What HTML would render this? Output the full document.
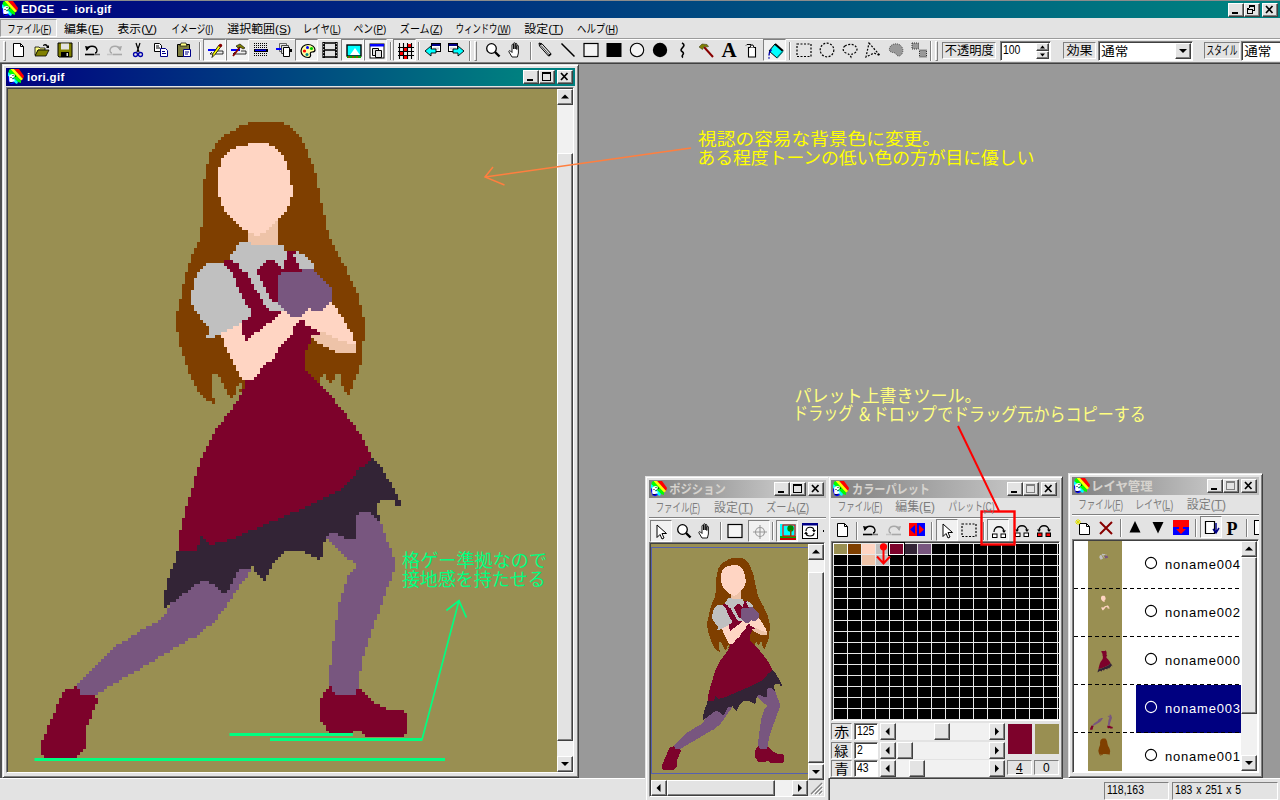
<!DOCTYPE html><html><head><meta charset="utf-8"><title>EDGE - iori.gif</title><style>
*{box-sizing:border-box}
html,body{margin:0;padding:0}
body{width:1280px;height:800px;overflow:hidden;position:relative;background:#E3E3E3;font-family:"Liberation Sans",sans-serif;font-size:12px;color:#000}
.a{position:absolute}
.face{background:#E3E3E3}
.win{position:absolute;background:#E3E3E3;border:1px solid;border-color:#E3E3E3 #404040 #404040 #E3E3E3;box-shadow:inset 1px 1px #fff,inset -1px -1px #808080}
.cap{position:absolute;height:18px;color:#fff;font-weight:bold;font-size:11px;line-height:18px;white-space:nowrap}
.capA{background:linear-gradient(90deg,#000080 0%,#008080 100%)}
.capI{background:linear-gradient(90deg,#808080 0%,#C0C0C0 100%);color:#D6D3CE}
.btn{position:absolute;background:#E3E3E3;border:1px solid;border-color:#fff #404040 #404040 #fff;box-shadow:inset -1px -1px #808080}
.sunk{position:absolute;border:1px solid;border-color:#808080 #fff #fff #808080;box-shadow:inset 1px 1px #404040}
.sunk1{position:absolute;border:1px solid;border-color:#808080 #fff #fff #808080}
.chk{position:absolute;border:1px solid;border-color:#808080 #fff #fff #808080;background:#F1F1F1}
.trk{position:absolute;background:#F1F1F1}
.vsep{position:absolute;width:2px;border-left:1px solid #808080;border-right:1px solid #fff}
.hsep{position:absolute;height:2px;border-top:1px solid #808080;border-bottom:1px solid #fff}
.grip{position:absolute;width:3px;border:1px solid;border-color:#fff #808080 #808080 #fff}
svg{position:absolute;overflow:visible}
.lt{position:absolute;font-size:13px;letter-spacing:.8px;white-space:nowrap}
.nd{position:absolute;font-size:12px;white-space:nowrap;transform:scaleX(.87);transform-origin:0 0}
</style></head><body><svg style="left:0;top:0" width="0" height="0"><defs><g id="Lhair"><path fill="#7F3F00" d="M80 11h12v1h-12zM77 12h17v1h-17zM76 13h19v1h-19zM74 14h22v1h-22zM72 15h25v1h-25zM71 16h27v1h-27zM70 17h28v1h-28zM69 18h30v2h-30zM68 20h32v1h-32zM67 21h33v2h-33zM67 23h34v2h-34zM66 25h36v3h-36zM66 28h37v2h-37zM65 30h38v3h-38zM65 33h39v5h-39zM65 38h40v4h-40zM65 42h41v4h-41zM64 46h42v1h-42zM64 47h43v3h-43zM64 50h44v1h-44zM63 51h45v1h-45zM63 52h46v1h-46zM62 53h47v1h-47zM62 54h48v1h-48zM61 55h49v1h-49zM61 56h50v2h-50zM60 58h52v1h-52zM60 59h53v2h-53zM59 61h54v1h-54zM59 62h55v2h-55zM59 64h56v1h-56zM58 65h57v1h-57zM58 66h58v2h-58zM58 68h59v2h-59zM57 70h60v2h-60zM57 72h61v2h-61zM56 74h62v2h-62zM56 76h63v5h-63zM57 81h62v3h-62zM57 84h61v2h-61zM58 86h60v3h-60zM59 89h59v3h-59zM60 92h57v3h-57zM61 95h7v2h-7zM70 95h10v1h-10zM99 95h6v1h-6zM106 95h3v2h-3zM111 95h5v2h-5zM71 96h9v2h-9zM102 96h2v1h-2zM62 97h6v2h-6zM103 97h1v1h-1zM107 97h1v1h-1zM111 97h4v2h-4zM72 98h5v1h-5zM78 98h1v2h-1zM63 99h5v2h-5zM72 99h4v1h-4zM112 99h3v1h-3zM73 100h3v2h-3zM77 100h2v1h-2zM112 100h2v1h-2zM64 101h4v1h-4zM113 101h1v1h-1zM65 102h3v1h-3zM74 102h1v1h-1zM66 103h3v1h-3zM68 104h1v1h-1z"/></g><g id="LlegB"><path fill="#7D022B" d="M22 199h1v1h-1zM19 200h5v1h-5zM18 201h6v1h-6zM18 202h11v1h-11zM17 203h13v2h-13zM16 205h13v2h-13zM16 207h12v1h-12zM15 208h13v2h-13zM14 210h13v2h-13zM13 212h13v3h-13zM12 215h14v2h-14zM11 217h15v3h-15zM11 220h14v1h-14zM11 221h13v1h-13zM12 222h11v1h-11z"/><path fill="#78567F" d="M72 159h9v1h-9zM70 160h11v1h-11zM68 161h12v1h-12zM66 162h14v1h-14zM64 163h15v1h-15zM62 164h16v1h-16zM60 165h17v1h-17zM59 166h18v1h-18zM57 167h19v1h-19zM56 168h19v1h-19zM55 169h20v1h-20zM55 170h19v1h-19zM54 171h19v2h-19zM53 173h19v1h-19zM53 174h18v1h-18zM52 175h18v1h-18zM51 176h19v1h-19zM50 177h19v1h-19zM48 178h20v1h-20zM46 179h20v1h-20zM44 180h21v1h-21zM43 181h21v1h-21zM41 182h22v1h-22zM40 183h20v1h-20zM38 184h21v1h-21zM36 185h21v1h-21zM35 186h20v1h-20zM34 187h20v1h-20zM33 188h19v1h-19zM32 189h18v1h-18zM31 190h18v1h-18zM30 191h17v1h-17zM29 192h16v1h-16zM28 193h16v1h-16zM27 194h15v1h-15zM26 195h14v1h-14zM25 196h13v1h-13zM24 197h13v1h-13zM23 198h12v1h-12zM23 199h10v1h-10zM24 200h8v1h-8zM24 201h6v1h-6z"/></g><g id="Ldress"><path fill="#7D022B" d="M93 54h3v3h-3zM72 57h26v4h-26zM73 61h25v1h-25zM73 62h27v2h-27zM74 64h26v3h-26zM75 67h25v1h-25zM76 68h24v2h-24zM77 70h23v4h-23zM78 74h22v3h-22zM78 77h21v2h-21zM78 79h23v1h-23zM78 80h25v1h-25zM78 81h26v1h-26zM78 82h25v1h-25zM79 83h22v1h-22zM80 84h21v1h-21zM80 85h20v2h-20zM80 87h19v7h-19zM80 94h20v1h-20zM80 95h21v1h-21zM80 96h22v1h-22zM79 97h24v1h-24zM79 98h25v1h-25zM79 99h26v1h-26zM78 100h28v1h-28zM78 101h29v1h-29zM77 102h31v1h-31zM77 103h32v1h-32zM76 104h33v1h-33zM75 105h35v1h-35zM75 106h36v1h-36zM74 107h38v1h-38zM73 108h40v1h-40zM72 109h41v1h-41zM72 110h42v1h-42zM71 111h44v1h-44zM70 112h46v1h-46zM69 113h47v1h-47zM69 114h48v1h-48zM68 115h50v2h-50zM67 117h52v2h-52zM66 119h54v2h-54zM65 121h56v2h-56zM64 123h57v1h-57zM64 124h56v1h-56zM64 125h55v1h-55zM63 126h54v1h-54zM63 127h53v2h-53zM62 129h53v1h-53zM62 130h52v1h-52zM62 131h51v1h-51zM62 132h50v1h-50zM61 133h50v1h-50zM61 134h48v1h-48zM61 135h46v1h-46zM60 136h45v1h-45zM60 137h43v1h-43zM60 138h41v1h-41zM59 139h40v1h-40zM59 140h38v1h-38zM59 141h35v1h-35zM59 142h33v1h-33zM58 143h32v1h-32zM58 144h29v1h-29zM58 145h27v1h-27zM58 146h25v1h-25zM57 147h23v1h-23zM57 148h21v1h-21zM57 149h7v3h-7zM65 149h11v1h-11zM66 150h7v1h-7zM67 151h2v1h-2zM57 152h6v2h-6z"/><path fill="#332436" d="M121 123h1v1h-1zM120 124h3v1h-3zM119 125h5v1h-5zM117 126h8v1h-8zM116 127h9v1h-9zM116 128h10v1h-10zM115 129h11v1h-11zM114 130h13v1h-13zM113 131h15v1h-15zM112 132h16v1h-16zM111 133h18v1h-18zM109 134h20v1h-20zM107 135h23v1h-23zM105 136h25v1h-25zM103 137h21v1h-21zM129 137h2v2h-2zM101 138h22v1h-22zM99 139h24v1h-24zM97 140h26v1h-26zM94 141h29v1h-29zM92 142h32v1h-32zM90 143h34v1h-34zM87 144h34v1h-34zM85 145h34v1h-34zM83 146h34v1h-34zM80 147h37v1h-37zM78 148h39v1h-39zM64 149h1v1h-1zM76 149h41v1h-41zM64 150h2v1h-2zM73 150h33v1h-33zM64 151h3v1h-3zM69 151h36v1h-36zM63 152h42v2h-42zM56 154h36v1h-36zM99 154h6v1h-6zM56 155h35v1h-35zM101 155h4v1h-4zM56 156h34v1h-34zM103 156h1v1h-1zM56 157h33v1h-33zM55 158h33v1h-33zM55 159h26v1h-26zM82 159h6v1h-6zM54 160h23v1h-23zM82 160h5v1h-5zM54 161h22v2h-22zM83 161h4v1h-4zM84 162h2v1h-2zM53 163h22v1h-22zM85 163h1v1h-1zM53 164h11v1h-11zM67 164h8v1h-8zM53 165h9v1h-9zM69 165h5v1h-5zM53 166h8v1h-8zM70 166h4v1h-4zM52 167h8v1h-8zM71 167h2v1h-2zM52 168h6v1h-6zM52 169h5v1h-5zM52 170h4v1h-4zM52 171h2v1h-2zM52 172h1v1h-1z"/></g><g id="Lskin"><path fill="#FFD5C3" d="M80 18h7v1h-7zM76 19h13v1h-13zM74 20h16v1h-16zM73 21h18v1h-18zM72 22h20v1h-20zM71 23h21v1h-21zM71 24h22v2h-22zM70 26h23v1h-23zM70 27h24v5h-24zM70 32h25v4h-25zM71 36h23v3h-23zM72 39h21v2h-21zM73 41h19v1h-19zM74 42h17v1h-17zM75 43h15v1h-15zM76 44h13v1h-13zM77 45h11v1h-11zM78 46h9v1h-9zM80 47h6v1h-6zM82 48h2v1h-2zM100 71h8v1h-8zM100 72h9v1h-9zM100 73h10v1h-10zM91 74h19v1h-19zM90 75h21v1h-21zM89 76h23v1h-23zM88 77h9v1h-9zM99 77h13v1h-13zM77 78h1v1h-1zM86 78h10v1h-10zM99 78h14v1h-14zM75 79h3v1h-3zM85 79h10v1h-10zM101 79h12v1h-12zM73 80h5v1h-5zM84 80h11v1h-11zM103 80h11v1h-11zM71 81h7v1h-7zM82 81h13v1h-13zM106 81h9v1h-9zM71 82h8v1h-8zM81 82h13v1h-13zM108 82h7v1h-7zM72 83h7v1h-7zM80 83h13v1h-13zM110 83h5v1h-5zM72 84h20v1h-20zM113 84h3v1h-3zM72 85h19v1h-19zM73 86h17v2h-17zM74 88h15v2h-15zM75 90h13v1h-13zM75 91h11v1h-11zM76 92h9v1h-9zM76 93h8v1h-8zM77 94h7v1h-7zM77 95h6v1h-6zM78 96h4v1h-4z"/><path fill="#EEC3A8" d="M89 44h1v1h-1zM88 45h2v1h-2zM87 46h3v1h-3zM86 47h4v1h-4zM80 48h2v1h-2zM84 48h6v1h-6zM80 49h10v3h-10zM104 81h2v1h-2zM101 82h7v1h-7zM102 83h8v1h-8zM103 84h10v1h-10zM105 85h11v1h-11zM107 86h9v1h-9zM109 87h7v1h-7z"/></g><g id="Lshirt"><path fill="#C0C0C0" d="M77 51h4v1h-4zM76 52h16v2h-16zM75 54h18v1h-18zM96 54h1v1h-1zM74 55h19v2h-19zM95 55h4v1h-4zM96 56h4v1h-4zM75 57h11v1h-11zM89 57h3v1h-3zM96 57h5v1h-5zM66 58h6v1h-6zM77 58h8v1h-8zM90 58h2v1h-2zM97 58h5v2h-5zM65 59h8v1h-8zM77 59h7v1h-7zM91 59h1v1h-1zM64 60h10v1h-10zM78 60h5v1h-5zM63 61h12v2h-12zM80 61h3v1h-3zM80 62h4v1h-4zM62 63h14v3h-14zM81 63h3v1h-3zM81 64h4v1h-4zM82 65h3v1h-3zM62 66h15v1h-15zM82 66h4v1h-4zM61 67h16v1h-16zM83 67h3v1h-3zM61 68h17v2h-17zM84 68h3v2h-3zM61 70h18v2h-18zM85 70h3v1h-3zM85 71h5v1h-5zM62 72h18v1h-18zM86 72h5v1h-5zM62 73h19v1h-19zM87 73h5v1h-5zM63 74h18v1h-18zM64 75h17v1h-17zM64 76h16v1h-16zM65 77h13v1h-13zM66 78h11v1h-11zM67 79h8v1h-8zM67 80h6v1h-6zM67 81h4v1h-4zM66 82h3v1h-3z"/><path fill="#78567F" d="M98 60h4v1h-4zM91 61h12v1h-12zM90 62h14v1h-14zM90 63h15v1h-15zM90 64h16v1h-16zM90 65h17v1h-17zM90 66h18v5h-18zM90 71h17v1h-17zM91 72h15v1h-15zM92 73h8v1h-8zM101 73h4v1h-4zM93 74h6v1h-6zM94 75h4v1h-4z"/></g><g id="LlegF"><path fill="#7D022B" d="M107 199h1v1h-1zM106 200h2v1h-2zM116 200h2v1h-2zM105 201h4v1h-4zM116 201h3v1h-3zM105 202h15v1h-15zM104 203h17v1h-17zM104 204h18v1h-18zM104 205h20v1h-20zM104 206h22v1h-22zM104 207h28v1h-28zM104 208h29v3h-29zM105 211h28v1h-28zM106 212h27v2h-27zM107 214h8v1h-8zM118 214h15v1h-15zM119 215h13v1h-13z"/><path fill="#78567F" d="M117 141h4v1h-4zM116 142h6v1h-6zM116 143h7v1h-7zM116 144h8v1h-8zM116 145h9v3h-9zM107 148h3v1h-3zM116 148h10v2h-10zM106 149h6v1h-6zM107 150h19v1h-19zM108 151h19v1h-19zM109 152h18v1h-18zM110 153h18v1h-18zM111 154h17v1h-17zM112 155h16v1h-16zM113 156h16v1h-16zM115 157h14v1h-14zM116 158h13v2h-13zM115 160h14v1h-14zM114 161h14v1h-14zM113 162h15v2h-15zM113 164h14v1h-14zM112 165h15v1h-15zM112 166h14v2h-14zM111 168h15v1h-15zM111 169h14v2h-14zM110 171h15v1h-15zM110 172h14v3h-14zM110 175h13v2h-13zM109 177h13v3h-13zM109 180h12v3h-12zM109 183h11v1h-11zM108 184h12v2h-12zM108 186h11v3h-11zM108 189h10v3h-10zM107 192h11v2h-11zM107 194h10v5h-10zM108 199h9v1h-9zM108 200h8v1h-8zM109 201h7v1h-7z"/></g><g id="girl"><use href="#Lhair"/><use href="#LlegB"/><use href="#Ldress"/><use href="#Lskin"/><use href="#Lshirt"/><use href="#LlegF"/></g></defs></svg><div class="a" style="left:0px;top:0px;width:1280px;height:1px;background:#8c8c8c"></div><div class="cap capA" style="left:0px;top:1px;width:1280px;height:17px;background:linear-gradient(90deg,#000080,#008080 95.8%)"><span class="a" style="left:21px;top:-1px;font-size:11.5px;letter-spacing:.2px">EDGE &nbsp;&ndash;&nbsp; iori.gif</span></div><svg style="left:2px;top:1px" width="16" height="16" viewBox="0 0 16 16" ><path d="M6 0h5l5 7-1 3z" fill="#f00"/><path d="M3 0h3l9 10-2 1.5L2.5 2z" fill="#ff0"/><path d="M1 1l1.5-1L13 11.5v2.5l-3-1L.5 3.5z" fill="#0f0"/><path d="M0 3.5h.8L10 13l-1 2-2-1L0 7z" fill="#0ff"/><path d="M0 7l7 7-3 1.2-2.5-1L0 10z" fill="#00f"/><path d="M1.2 6.5l2.8-1.5 2.5.5.5 2-2 1.2-.8 1.8 2-.3.5 2-3.5 1-2-.7z" fill="#fff"/><path d="M2.5 8h1v1h-1zM4.5 6h1v1h-1zM4.5 9h1v1h-1zM6.8 6.5h.9v1.5h-.9zM2 13h2.5v.8H2z" fill="#000"/></svg><div class="btn" style="left:1228px;top:3px;width:16px;height:14px;"><svg style="left:0px;top:0px" width="14" height="12" viewBox="0 0 14 12" ><rect x="3" y="8" width="6" height="2" fill="#000"/></svg></div><div class="btn" style="left:1244px;top:3px;width:16px;height:14px;"><svg style="left:0px;top:0px" width="14" height="12" viewBox="0 0 14 12" ><path d="M4 1h6v6H8V5H4zM5 3v1h3v2h1V3zM2 4h6v6H2zM3 6v3h4V6z" fill="#000" fill-rule="evenodd"/></svg></div><div class="btn" style="left:1262px;top:3px;width:16px;height:14px;"><svg style="left:0px;top:0px" width="14" height="12" viewBox="0 0 14 12" ><path d="M3 2l6.5 7M9.5 2L3 9" stroke="#000" stroke-width="1.7" fill="none"/></svg></div><div class="face a" style="left:0px;top:18px;width:1280px;height:20px;"></div><div class="sunk1" style="left:0px;top:19px;width:57px;height:18px;border-color:#9a9a9a #fff #fff #9a9a9a;background:#E1E1E1"></div><div class="a" style="left:0px;top:38px;width:1280px;height:1px;background:#9c9c9c"></div><div class="a" style="left:0px;top:39px;width:1280px;height:1px;background:#fff"></div><div class="a" style="left:0px;top:62px;width:1280px;height:1px;background:#808080"></div><div class="a" style="left:0px;top:63px;width:1280px;height:715px;background:#999999;border-top:1px solid #404040;border-left:2px solid #505050"></div><div class="face a" style="left:0px;top:778px;width:1280px;height:22px;border-top:1px solid #fff"></div><div class="sunk1" style="left:1104px;top:782px;width:65px;height:18px;"><span class="nd" style="left:2px;top:0px">118,163</span></div><div class="sunk1" style="left:1172px;top:782px;width:106px;height:18px;"><span class="nd" style="left:2px;top:0px;word-spacing:1px">183 x 251 x 5</span></div><div class="grip" style="left:3px;top:41px;width:3px;height:20px;"></div><svg style="left:11px;top:42px" width="16" height="16" viewBox="0 0 16 16" ><path d="M2.5 1.5h7l3 3v10h-10z" fill="#fff" stroke="#000"/><path d="M9.5 1.5v3h3" stroke="#000" fill="none"/></svg><svg style="left:34px;top:42px" width="16" height="16" viewBox="0 0 16 16" ><path d="M1 5h4l1 1h5v2H4l-2 5H1z" fill="#ffff80" stroke="#000" stroke-width=".8"/><path d="M4 8h11l-3 6H1z" fill="#808000" stroke="#000" stroke-width=".8"/><path d="M9 3c2-2 4-1 5 1l1-1v3h-3l1-1c-1-1.5-2-2-4-1z" fill="#000"/></svg><svg style="left:57px;top:42px" width="16" height="16" viewBox="0 0 16 16" ><path d="M1 1h14v14H2l-1-1z" fill="#808000" stroke="#000"/><rect x="4" y="1.5" width="8" height="6" fill="#E3E3E3"/><rect x="4" y="10" width="8" height="5" fill="#000"/><rect x="9.5" y="11" width="1.5" height="3" fill="#ddd"/></svg><div class="vsep" style="left:78px;top:42px;width:2px;height:18px;"></div><svg style="left:84px;top:42px" width="16" height="16" viewBox="0 0 16 16" ><path d="M3 8c1-5 9-5 10 0 0 2-1 3-2 3" stroke="#000" stroke-width="1.3" fill="none"/><path d="M1 4l5 1-3.5 4z" fill="#000"/><path d="M1 12.5h9" stroke="#000" stroke-width="1.6"/><path d="M10.5 12.5h5" stroke="#000" stroke-width="1.6" stroke-dasharray="1 1"/></svg><svg style="left:107px;top:42px" width="16" height="16" viewBox="0 0 16 16" ><g transform="translate(16,0) scale(-1,1)"><path d="M3 8c1-5 9-5 10 0 0 2-1 3-2 3" stroke="#a8a8a8" stroke-width="1.3" fill="none"/><path d="M1 4l5 1-3.5 4z" fill="#a8a8a8"/><path d="M1 12.5h9" stroke="#a8a8a8" stroke-width="1.6"/><path d="M10.5 12.5h5" stroke="#a8a8a8" stroke-width="1.6" stroke-dasharray="1 1"/></g></svg><svg style="left:130px;top:42px" width="16" height="16" viewBox="0 0 16 16" ><path d="M6 1l3 9M10 1L7 10" stroke="#000" stroke-width="1.2"/><circle cx="5.5" cy="12.5" r="2" stroke="#00a" stroke-width="1.3" fill="none"/><circle cx="10.5" cy="12.5" r="2" stroke="#00a" stroke-width="1.3" fill="none"/></svg><svg style="left:153px;top:42px" width="16" height="16" viewBox="0 0 16 16" ><path d="M1.5 1.5h5l2 2v6h-7z" fill="#fff" stroke="#000"/><path d="M3 4h3M3 6h4" stroke="#000"/><path d="M7.5 6.5h5l2 2v6h-7z" fill="#fff" stroke="#008"/><path d="M9 9.5h3M9 11.5h4" stroke="#008"/></svg><svg style="left:176px;top:42px" width="16" height="16" viewBox="0 0 16 16" ><path d="M1.5 2.5h12v12h-12z" fill="#808040" stroke="#000"/><path d="M5 1h5l1 3H4z" fill="#ff8" stroke="#000" stroke-width=".7"/><path d="M7.5 7.5h7v7h-7z" fill="#fff" stroke="#008"/><path d="M9 10h4M9 12h3" stroke="#008"/></svg><div class="vsep" style="left:199px;top:42px;width:2px;height:18px;"></div><div class="chk" style="left:203px;top:39px;width:23px;height:22px;"></div><svg style="left:208px;top:43px" width="16" height="16" viewBox="0 0 16 16" ><path d="M0 7h9" stroke="#00f" stroke-width="2"/><path d="M9 8h6v3H2l2-2" fill="#eee" stroke="#000" stroke-width=".8"/><path d="M11 2l2 1.5-6 8-3 3 1-4z" fill="#ff0" stroke="#000" stroke-width=".8"/><circle cx="12.5" cy="2.5" r="1.7" fill="#800"/></svg><div class="chk" style="left:226px;top:39px;width:23px;height:22px;"></div><svg style="left:231px;top:43px" width="16" height="16" viewBox="0 0 16 16" ><path d="M0 7h9" stroke="#00f" stroke-width="2"/><path d="M10 8h5v3H2l2-2" fill="#eee" stroke="#000" stroke-width=".8"/><path d="M9 4L2 13" stroke="#800" stroke-width="1.8"/><path d="M5 3l4-2 5 4-2 1-3-2-2 1z" fill="#808000" stroke="#000" stroke-width=".6"/></svg><svg style="left:253px;top:42px" width="16" height="16" viewBox="0 0 16 16" ><path d="M1 1.5h14M1 3.5h14M1 5.5h14M1 11.5h14M1 13.5h14" stroke="#000" stroke-dasharray="1 1"/><rect x="1" y="7" width="14" height="3" fill="#000"/><path d="M2 8.3h11" stroke="#00f" stroke-width="1.4"/></svg><svg style="left:276px;top:42px" width="16" height="16" viewBox="0 0 16 16" ><path d="M3.5 1.5h7v8h-7z" fill="#E3E3E3" stroke="#666"/><path d="M5.5 3.5h7v8h-7z" fill="#E3E3E3" stroke="#444"/><path d="M7.5 5.5h6v9h-6z" fill="#fff" stroke="#000"/><path d="M0 7h5" stroke="#00f" stroke-width="2"/><path d="M13 7h3v3h-3z" fill="#000"/></svg><div class="chk" style="left:295px;top:39px;width:23px;height:22px;"></div><svg style="left:300px;top:43px" width="16" height="16" viewBox="0 0 16 16" ><path d="M8 1.5c4 0 7 2.5 7 5.5 0 2-2 2-3 2-1.5 0-2 1-1.5 2.5.5 1.5-.5 3-2.5 3-4 0-7-3-7-6.5 0-3.5 3-6.5 7-6.5z" fill="#ffffa0" stroke="#000" stroke-width="1.2"/><circle cx="4.5" cy="8" r="1.6" fill="#f00"/><circle cx="7.5" cy="4.5" r="1.5" fill="#00f"/><circle cx="11.5" cy="5.5" r="1.6" fill="#0c0"/><circle cx="7" cy="11.5" r="1.5" fill="#088"/></svg><svg style="left:322px;top:42px" width="16" height="16" viewBox="0 0 16 16" ><rect x="0.5" y="0.5" width="15" height="15" fill="#E3E3E3"/><path d="M1.7 0v16M14.3 0v16" stroke="#000" stroke-width="2.6"/><path d="M1.7 1v15M14.3 1v15" stroke="#E3E3E3" stroke-width="1" stroke-dasharray="1.2 1.8"/><path d="M3 1h10M3 8h10M3 15h10" stroke="#000" stroke-width="1.5"/></svg><div class="chk" style="left:341px;top:39px;width:23px;height:22px;"></div><svg style="left:346px;top:43px" width="16" height="16" viewBox="0 0 16 16" ><rect x="1" y="2" width="14" height="11" fill="#0ff" stroke="#000" stroke-width="1.4"/><path d="M4 12l5-7 5 7z" fill="#fff"/><path d="M1 13h14v2H1z" fill="#0a0"/><path d="M2 14h2M6 14h2M10 14h2" stroke="#f00"/></svg><div class="chk" style="left:364px;top:39px;width:23px;height:22px;"></div><svg style="left:369px;top:43px" width="16" height="16" viewBox="0 0 16 16" ><rect x="1" y="1" width="14" height="14" fill="#fff" stroke="#000"/><rect x="1" y="1" width="14" height="2.5" fill="#00f"/><path d="M3.5 5.5h6v7h-6z" fill="#E3E3E3" stroke="#000"/><path d="M6.5 7.5h6v7h-6z" fill="#E3E3E3" stroke="#000"/></svg><div class="vsep" style="left:390px;top:42px;width:2px;height:18px;"></div><div class="chk" style="left:393px;top:39px;width:23px;height:22px;"></div><svg style="left:398px;top:43px" width="16" height="16" viewBox="0 0 16 16" ><path d="M9 1h4v3H9zM5 5h4v4H5zM1 9h4v4H1z M5 13h4v3H5z" fill="#f00"/><path d="M0 4.5h16M0 8.5h16M0 12.5h16M1.5 0v16M5.5 0v16M9.5 0v16M13.5 0v16" stroke="#000" stroke-width="1.1"/></svg><div class="vsep" style="left:418px;top:42px;width:2px;height:18px;"></div><svg style="left:425px;top:42px" width="16" height="16" viewBox="0 0 16 16" ><rect x="6.5" y="1.5" width="9" height="8" fill="#fff" stroke="#000"/><rect x="7" y="2" width="8" height="2" fill="#008"/><rect x="8" y="5.5" width="6" height="2" fill="#ccc"/><path d="M0 9l6-5v3h5v4H6v3z" fill="#0ff" stroke="#000" stroke-width=".9"/></svg><svg style="left:448px;top:42px" width="16" height="16" viewBox="0 0 16 16" ><g transform="translate(16,0) scale(-1,1)"><rect x="6.5" y="1.5" width="9" height="8" fill="#fff" stroke="#000"/><rect x="7" y="2" width="8" height="2" fill="#008"/><rect x="8" y="5.5" width="6" height="2" fill="#ccc"/><path d="M0 9l6-5v3h5v4H6v3z" fill="#0ff" stroke="#000" stroke-width=".9"/></g></svg><div class="vsep" style="left:469px;top:41px;width:2px;height:20px;"></div><div class="grip" style="left:474px;top:41px;width:3px;height:20px;"></div><svg style="left:485px;top:42px" width="16" height="16" viewBox="0 0 16 16" ><circle cx="6.5" cy="6.5" r="4.8" fill="#fff" stroke="#000" stroke-width="1.3"/><path d="M10 10l4.5 4.5" stroke="#000" stroke-width="2.4"/></svg><svg style="left:508px;top:42px" width="16" height="16" viewBox="0 0 16 16" ><path d="M4 15l-3-5c-.5-1 .5-2 1.5-1l1.5 1.5V3c0-1 1.6-1 1.6 0v4V1.5c0-1 1.6-1 1.6 0V7 2c0-1 1.6-1 1.6 0v5.5V4c0-1 1.6-1 1.6 0v7l-1 4z" fill="#fff" stroke="#000" stroke-width=".9"/></svg><div class="vsep" style="left:530px;top:42px;width:2px;height:18px;"></div><svg style="left:537px;top:42px" width="16" height="16" viewBox="0 0 16 16" ><path d="M2 1l3 .8 9 10-2.5 2.2-9-10z" fill="#E3E3E3" stroke="#000" stroke-width="1"/><path d="M2 1l1.5 2.5L5 2z" fill="#000"/><path d="M11 13l1.2 1.5 2.3-2-.8-1.2z" fill="#000"/><path d="M4 3.5l8 9" stroke="#000" stroke-width=".7"/></svg><svg style="left:560px;top:42px" width="16" height="16" viewBox="0 0 16 16" ><path d="M1.5 1.5l13 13" stroke="#000" stroke-width="1.5"/></svg><svg style="left:583px;top:42px" width="16" height="16" viewBox="0 0 16 16" ><rect x="1" y="1.5" width="14" height="13" fill="#f4f4f4" stroke="#000" stroke-width="1.2"/></svg><svg style="left:606px;top:42px" width="16" height="16" viewBox="0 0 16 16" ><rect x="0.5" y="1" width="15" height="14" fill="#000"/></svg><svg style="left:629px;top:42px" width="16" height="16" viewBox="0 0 16 16" ><circle cx="8" cy="8" r="6.7" fill="#f4f4f4" stroke="#000" stroke-width="1.1"/></svg><svg style="left:652px;top:42px" width="16" height="16" viewBox="0 0 16 16" ><circle cx="8" cy="8" r="7.2" fill="#000"/></svg><svg style="left:675px;top:42px" width="16" height="16" viewBox="0 0 16 16" ><path d="M7 1c6 3-4 6 0 8.5 4 2.5-2 4 1 6" stroke="#000" stroke-width="1.6" fill="none"/></svg><svg style="left:698px;top:42px" width="16" height="16" viewBox="0 0 16 16" ><path d="M6 5l9 10" stroke="#800" stroke-width="2"/><path d="M1 5l3-3 5 .5 1.5 2-2 .5-2-1-2 3.5z" fill="#808000" stroke="#442" stroke-width=".6"/></svg><svg style="left:721px;top:42px" width="16" height="16" viewBox="0 0 16 16" ><text x="8" y="15" font-family="Liberation Serif" font-weight="bold" font-size="21" text-anchor="middle" fill="#000">A</text></svg><svg style="left:744px;top:42px" width="16" height="16" viewBox="0 0 16 16" ><path d="M4.5 5.5h7v9.5h-7z" fill="#fff" stroke="#000" stroke-width="1.1"/><path d="M6 5.5l1-2.5h2l1 2.5" fill="#fff" stroke="#000"/><path d="M7 2.5H3l-1 1" stroke="#000" fill="none"/></svg><div class="chk" style="left:763px;top:39px;width:23px;height:22px;"></div><svg style="left:768px;top:43px" width="16" height="16" viewBox="0 0 16 16" ><path d="M7 1l8 7-6 7-8-7z" fill="#0ff" stroke="#000" stroke-width="1"/><path d="M7 1l8 7" stroke="#000" stroke-width="2"/><path d="M3.5 6.5c-2 2-2.5 4-2.5 6" stroke="#00a" stroke-width="1.5" fill="none"/><path d="M1 13.5l1 2h-2z" fill="#00a"/><path d="M9 15l6-7" stroke="#088" stroke-width="1.2"/></svg><div class="vsep" style="left:789px;top:42px;width:2px;height:18px;"></div><svg style="left:796px;top:42px" width="16" height="16" viewBox="0 0 16 16" ><rect x="1" y="2" width="14" height="12.5" stroke="#000" fill="none" stroke-dasharray="2 1.5" stroke-width="1.2"/></svg><svg style="left:819px;top:42px" width="16" height="16" viewBox="0 0 16 16" ><circle cx="8" cy="8" r="6.8" stroke="#000" fill="none" stroke-dasharray="2 1.5" stroke-width="1.2"/></svg><svg style="left:842px;top:42px" width="16" height="16" viewBox="0 0 16 16" ><path d="M3 4c4-3 11-2 12 3 0 3-3 5-5 5l-1 3c-1-2-2-3-5-4-3-1-4-5-1-7z" stroke="#000" fill="none" stroke-dasharray="2 1.5" stroke-width="1.2"/></svg><svg style="left:865px;top:42px" width="16" height="16" viewBox="0 0 16 16" ><path d="M4 1l11 12.5-6-2.5-8 4z" stroke="#000" fill="none" stroke-dasharray="2 1.5" stroke-width="1.2"/></svg><svg style="left:888px;top:42px" width="16" height="16" viewBox="0 0 16 16" ><path d="M2 5c2-4 9-4 11-1 3 3 2 7 0 9-2 2-4 1-5-1-1-2-3-1-5-2-2-1-2-3-1-5z" fill="#999" stroke="#555" stroke-dasharray="1 1"/></svg><svg style="left:911px;top:42px" width="16" height="16" viewBox="0 0 16 16" ><rect x="1" y="1" width="6.500" height="6" fill="#999" stroke="#333" stroke-dasharray="1 1"/><rect x="8.500" y="8" width="7" height="7" fill="#999" stroke="#333" stroke-dasharray="1 1"/></svg><div class="vsep" style="left:930px;top:41px;width:2px;height:20px;"></div><div class="grip" style="left:935px;top:41px;width:3px;height:20px;"></div><div class="sunk1" style="left:942px;top:42px;width:54px;height:17px;"></div><div class="sunk" style="left:1000px;top:41px;width:51px;height:20px;background:#fff"><span class="nd" style="left:2px;top:1px">100</span></div><div class="btn" style="left:1036px;top:43px;width:13px;height:8px;"><svg style="left:0px;top:0px" width="11" height="6" viewBox="0 0 11 6" ><path d="M3 4.500h5l-2.500-3z" fill="#000"/></svg></div><div class="btn" style="left:1036px;top:51px;width:13px;height:8px;"><svg style="left:0px;top:0px" width="11" height="6" viewBox="0 0 11 6" ><path d="M3 1.500h5l-2.500 3z" fill="#000"/></svg></div><div class="sunk1" style="left:1063px;top:42px;width:33px;height:17px;"></div><div class="sunk" style="left:1098px;top:41px;width:95px;height:20px;background:#fff"></div><div class="btn" style="left:1175px;top:43px;width:16px;height:16px;"><svg style="left:0px;top:0px" width="14" height="14" viewBox="0 0 14 14" ><path d="M3.0 5.0h8l-4 4z" fill="#000"/></svg></div><div class="sunk1" style="left:1204px;top:42px;width:36px;height:17px;"></div><div class="sunk" style="left:1241px;top:41px;width:60px;height:20px;background:#fff"></div><div class="win" style="left:2px;top:64px;width:577px;height:714px;"></div><div class="cap capA" style="left:6px;top:68px;width:569px;height:18px;background:linear-gradient(90deg,#000080,#008080 90.5%)"><span class="a" style="left:21px;top:0px;font-size:11.5px;letter-spacing:.3px">iori.gif</span></div><svg style="left:8px;top:69px" width="16" height="16" viewBox="0 0 16 16" ><path d="M6 0h5l5 7-1 3z" fill="#f00"/><path d="M3 0h3l9 10-2 1.5L2.5 2z" fill="#ff0"/><path d="M1 1l1.5-1L13 11.5v2.5l-3-1L.5 3.5z" fill="#0f0"/><path d="M0 3.5h.8L10 13l-1 2-2-1L0 7z" fill="#0ff"/><path d="M0 7l7 7-3 1.2-2.5-1L0 10z" fill="#00f"/><path d="M1.2 6.5l2.8-1.5 2.5.5.5 2-2 1.2-.8 1.8 2-.3.5 2-3.5 1-2-.7z" fill="#fff"/><path d="M2.5 8h1v1h-1zM4.5 6h1v1h-1zM4.5 9h1v1h-1zM6.8 6.5h.9v1.5h-.9zM2 13h2.5v.8H2z" fill="#000"/></svg><div class="btn" style="left:523px;top:70px;width:16px;height:14px;"><svg style="left:0px;top:0px" width="14" height="12" viewBox="0 0 14 12" ><rect x="3" y="8" width="6" height="2" fill="#000"/></svg></div><div class="btn" style="left:539px;top:70px;width:16px;height:14px;"><svg style="left:0px;top:0px" width="14" height="12" viewBox="0 0 14 12" ><path d="M2 1h9v9H2zM3 3v6h7V3z" fill="#000" fill-rule="evenodd"/></svg></div><div class="btn" style="left:557px;top:70px;width:16px;height:14px;"><svg style="left:0px;top:0px" width="14" height="12" viewBox="0 0 14 12" ><path d="M3 2l6.5 7M9.5 2L3 9" stroke="#000" stroke-width="1.7" fill="none"/></svg></div><div class="sunk" style="left:6px;top:87px;width:568px;height:686px;background:#998F52"></div><svg style="left:8px;top:89px" width="549" height="683" viewBox="0 0 183 227.667" shape-rendering="crispEdges"><use href="#girl"/></svg><div class="trk" style="left:557px;top:89px;width:16px;height:683px;"></div><div class="btn" style="left:557px;top:89px;width:16px;height:16px;"><svg style="left:0px;top:0px" width="14" height="14" viewBox="0 0 14 14" ><path d="M3.0 8.500h8l-4-4z" fill="#000"/></svg></div><div class="btn" style="left:557px;top:756px;width:16px;height:16px;"><svg style="left:0px;top:0px" width="14" height="14" viewBox="0 0 14 14" ><path d="M3.0 5.0h8l-4 4z" fill="#000"/></svg></div><div class="btn" style="left:557px;top:153px;width:16px;height:588px;"></div><div class="win" style="left:645px;top:476px;width:185px;height:330px;"></div><div class="cap capI" style="left:649px;top:480px;width:177px;height:18px;background:linear-gradient(90deg,#808080,#C0C0C0 69.5%)"></div><svg style="left:651px;top:481px" width="16" height="16" viewBox="0 0 16 16" ><path d="M6 0h5l5 7-1 3z" fill="#f00"/><path d="M3 0h3l9 10-2 1.5L2.5 2z" fill="#ff0"/><path d="M1 1l1.5-1L13 11.5v2.5l-3-1L.5 3.5z" fill="#0f0"/><path d="M0 3.5h.8L10 13l-1 2-2-1L0 7z" fill="#0ff"/><path d="M0 7l7 7-3 1.2-2.5-1L0 10z" fill="#00f"/><path d="M1.2 6.5l2.8-1.5 2.5.5.5 2-2 1.2-.8 1.8 2-.3.5 2-3.5 1-2-.7z" fill="#fff"/><path d="M2.5 8h1v1h-1zM4.5 6h1v1h-1zM4.5 9h1v1h-1zM6.8 6.5h.9v1.5h-.9zM2 13h2.5v.8H2z" fill="#000"/></svg><div class="btn" style="left:774px;top:482px;width:16px;height:14px;"><svg style="left:0px;top:0px" width="14" height="12" viewBox="0 0 14 12" ><rect x="3" y="8" width="6" height="2" fill="#000"/></svg></div><div class="btn" style="left:790px;top:482px;width:16px;height:14px;"><svg style="left:0px;top:0px" width="14" height="12" viewBox="0 0 14 12" ><path d="M2 1h9v9H2zM3 3v6h7V3z" fill="#000" fill-rule="evenodd"/></svg></div><div class="btn" style="left:808px;top:482px;width:16px;height:14px;"><svg style="left:0px;top:0px" width="14" height="12" viewBox="0 0 14 12" ><path d="M3 2l6.5 7M9.5 2L3 9" stroke="#000" stroke-width="1.7" fill="none"/></svg></div><div class="hsep" style="left:649px;top:517px;width:177px;height:2px;"></div><div class="chk" style="left:650px;top:520px;width:22px;height:22px;"></div><svg style="left:654px;top:524px" width="16" height="16" viewBox="0 0 16 16" ><path d="M3 1v12.5l3-3 2 4.5 2-1-2-4.5h4.5z" fill="#fff" stroke="#000" stroke-width="1"/></svg><svg style="left:676px;top:523px" width="16" height="16" viewBox="0 0 16 16" ><circle cx="6.5" cy="6.5" r="4.8" fill="#fff" stroke="#000" stroke-width="1.3"/><path d="M10 10l4.5 4.5" stroke="#000" stroke-width="2.4"/></svg><svg style="left:698px;top:523px" width="16" height="16" viewBox="0 0 16 16" ><path d="M4 15l-3-5c-.5-1 .5-2 1.5-1l1.5 1.5V3c0-1 1.6-1 1.6 0v4V1.5c0-1 1.6-1 1.6 0V7 2c0-1 1.6-1 1.6 0v5.5V4c0-1 1.6-1 1.6 0v7l-1 4z" fill="#fff" stroke="#000" stroke-width=".9"/></svg><div class="vsep" style="left:720px;top:522px;width:2px;height:18px;"></div><svg style="left:727px;top:523px" width="16" height="16" viewBox="0 0 16 16" ><rect x="1" y="1.5" width="14" height="13" fill="#f4f4f4" stroke="#000" stroke-width="1.2"/></svg><div class="chk" style="left:748px;top:520px;width:22px;height:22px;"></div><svg style="left:752px;top:524px" width="16" height="16" viewBox="0 0 16 16" ><circle cx="8" cy="8" r="4.5" stroke="#999" fill="none" stroke-width="1.1"/><path d="M8 1v14M1 8h14" stroke="#999" stroke-width="1.1"/></svg><div class="vsep" style="left:772px;top:522px;width:2px;height:18px;"></div><div class="chk" style="left:776px;top:520px;width:22px;height:22px;"></div><svg style="left:780px;top:524px" width="16" height="16" viewBox="0 0 16 16" ><rect x="0" y="0" width="16" height="12" fill="#0ff"/><rect x="0" y="12" width="16" height="2" fill="#0a0"/><rect x="0" y="14" width="16" height="2" fill="#c00"/><rect x="3" y="1" width="12" height="11" fill="none" stroke="#f00" stroke-width="1.2"/><circle cx="10.5" cy="4.5" r="3.2" fill="#080"/><rect x="10" y="6" width="1.500" height="6" fill="#840"/></svg><svg style="left:802px;top:523px" width="16" height="16" viewBox="0 0 16 16" ><rect x=".5" y=".5" width="15" height="15" fill="#fff" stroke="#000"/><rect x="0" y="0" width="16" height="2.500" fill="#008"/><path d="M4 8c0-5 8-5 8 0M12 10c0 4-8 4-8 0" stroke="#000" fill="none" stroke-width="1.2"/><path d="M10 7h4l-2 2.5zM2 11h4l-2-2.500z" fill="#000"/></svg><div class="a" style="left:823px;top:530px;width:1px;height:2px;background:#000"></div><div class="sunk" style="left:649px;top:542px;width:176px;height:255px;background:#998F52"></div><svg style="left:651px;top:544px" width="157" height="236" viewBox="0 -3 157 236" shape-rendering="crispEdges"><use href="#girl"/><rect x="0.5" y="0.5" width="160" height="226" fill="none" stroke="#5560B0" stroke-width="1"/></svg><div class="trk" style="left:808px;top:544px;width:16px;height:236px;"></div><div class="btn" style="left:808px;top:544px;width:16px;height:16px;"><svg style="left:0px;top:0px" width="14" height="14" viewBox="0 0 14 14" ><path d="M3.0 8.500h8l-4-4z" fill="#000"/></svg></div><div class="btn" style="left:808px;top:764px;width:16px;height:16px;"><svg style="left:0px;top:0px" width="14" height="14" viewBox="0 0 14 14" ><path d="M3.0 5.0h8l-4 4z" fill="#000"/></svg></div><div class="btn" style="left:808px;top:572px;width:16px;height:191px;"></div><div class="trk" style="left:651px;top:780px;width:157px;height:16px;"></div><div class="btn" style="left:651px;top:780px;width:16px;height:16px;"><svg style="left:0px;top:0px" width="14" height="14" viewBox="0 0 14 14" ><path d="M8.500 3.0v8l-4-4z" fill="#000"/></svg></div><div class="btn" style="left:792px;top:780px;width:16px;height:16px;"><svg style="left:0px;top:0px" width="14" height="14" viewBox="0 0 14 14" ><path d="M5.0 3.0v8l4-4z" fill="#000"/></svg></div><div class="btn" style="left:667px;top:780px;width:108px;height:16px;"></div><div class="face a" style="left:808px;top:780px;width:16px;height:16px;"><svg style="left:2px;top:2px" width="13" height="13" viewBox="0 0 13 13" ><path d="M12 1L1 12M12 5L5 12M12 9L9 12" stroke="#808080" stroke-width="1.3"/><path d="M13 2L2 13M13 6L6 13M13 10L10 13" stroke="#fff" stroke-width="1"/></svg></div><div class="win" style="left:828px;top:476px;width:235px;height:303px;"></div><div class="cap capI" style="left:831px;top:480px;width:229px;height:18px;background:linear-gradient(90deg,#808080,#C0C0C0 76.0%)"></div><svg style="left:833px;top:481px" width="16" height="16" viewBox="0 0 16 16" ><path d="M6 0h5l5 7-1 3z" fill="#f00"/><path d="M3 0h3l9 10-2 1.5L2.5 2z" fill="#ff0"/><path d="M1 1l1.5-1L13 11.5v2.5l-3-1L.5 3.5z" fill="#0f0"/><path d="M0 3.5h.8L10 13l-1 2-2-1L0 7z" fill="#0ff"/><path d="M0 7l7 7-3 1.2-2.5-1L0 10z" fill="#00f"/><path d="M1.2 6.5l2.8-1.5 2.5.5.5 2-2 1.2-.8 1.8 2-.3.5 2-3.5 1-2-.7z" fill="#fff"/><path d="M2.5 8h1v1h-1zM4.5 6h1v1h-1zM4.5 9h1v1h-1zM6.8 6.5h.9v1.5h-.9zM2 13h2.5v.8H2z" fill="#000"/></svg><div class="btn" style="left:1007px;top:482px;width:16px;height:14px;"><svg style="left:0px;top:0px" width="14" height="12" viewBox="0 0 14 12" ><rect x="3" y="8" width="6" height="2" fill="#000"/></svg></div><div class="btn" style="left:1023px;top:482px;width:16px;height:14px;"><svg style="left:0px;top:0px" width="14" height="12" viewBox="0 0 14 12" ><path d="M2 1h9v9H2zM3 3v6h7V3z" fill="#808080" fill-rule="evenodd"/></svg></div><div class="btn" style="left:1041px;top:482px;width:16px;height:14px;"><svg style="left:0px;top:0px" width="14" height="12" viewBox="0 0 14 12" ><path d="M3 2l6.5 7M9.5 2L3 9" stroke="#000" stroke-width="1.7" fill="none"/></svg></div><div class="hsep" style="left:831px;top:517px;width:229px;height:2px;"></div><svg style="left:835px;top:522px" width="16" height="16" viewBox="0 0 16 16" ><path d="M2.5 1.5h7l3 3v10h-10z" fill="#fff" stroke="#000"/><path d="M9.5 1.5v3h3" stroke="#000" fill="none"/></svg><div class="vsep" style="left:856px;top:522px;width:2px;height:18px;"></div><svg style="left:862px;top:522px" width="16" height="16" viewBox="0 0 16 16" ><path d="M3 8c1-5 9-5 10 0 0 2-1 3-2 3" stroke="#000" stroke-width="1.3" fill="none"/><path d="M1 4l5 1-3.5 4z" fill="#000"/><path d="M1 12.5h9" stroke="#000" stroke-width="1.6"/><path d="M10.5 12.5h5" stroke="#000" stroke-width="1.6" stroke-dasharray="1 1"/></svg><svg style="left:886px;top:522px" width="16" height="16" viewBox="0 0 16 16" ><g transform="translate(16,0) scale(-1,1)"><path d="M3 8c1-5 9-5 10 0 0 2-1 3-2 3" stroke="#a8a8a8" stroke-width="1.3" fill="none"/><path d="M1 4l5 1-3.5 4z" fill="#a8a8a8"/><path d="M1 12.5h9" stroke="#a8a8a8" stroke-width="1.6"/><path d="M10.5 12.5h5" stroke="#a8a8a8" stroke-width="1.6" stroke-dasharray="1 1"/></g></svg><svg style="left:909px;top:523px" width="16" height="16" viewBox="0 0 16 16" ><rect x="0" y="0" width="8" height="13" fill="#f00"/><rect x="8" y="0" width="8" height="13" fill="#00f"/><path d="M1 6.5l5-4.5v9z" fill="#00f"/><path d="M15 6.5l-5-4.5v9z" fill="#f00"/></svg><div class="vsep" style="left:931px;top:522px;width:2px;height:18px;"></div><div class="chk" style="left:936px;top:519px;width:22px;height:22px;"></div><svg style="left:940px;top:523px" width="16" height="16" viewBox="0 0 16 16" ><path d="M3 1v12.5l3-3 2 4.5 2-1-2-4.5h4.5z" fill="#fff" stroke="#000" stroke-width="1"/></svg><svg style="left:961px;top:522px" width="16" height="16" viewBox="0 0 16 16" ><rect x="1" y="2" width="14" height="12.5" stroke="#000" fill="none" stroke-dasharray="2 1.5" stroke-width="1.2"/></svg><div class="vsep" style="left:983px;top:522px;width:2px;height:18px;"></div><div class="chk" style="left:987px;top:519px;width:22px;height:22px;"></div><svg style="left:991px;top:523px" width="16" height="16" viewBox="0 0 16 16" ><path d="M3 9c0-7 10-7 10 0" stroke="#000" fill="none" stroke-width="1.3"/><path d="M11 7.5h4l-2 2.5z" fill="#000"/><rect x="1.500" y="11" width="4.500" height="3.500" fill="#fff" stroke="#000"/><rect x="10" y="11" width="4.500" height="3.500" fill="#fff" stroke="#000"/></svg><svg style="left:1014px;top:522px" width="16" height="16" viewBox="0 0 16 16" ><path d="M3 9c0-7 10-7 10 0" stroke="#000" fill="none" stroke-width="1.3"/><path d="M11 7.5h4l-2 2.5z" fill="#000"/><path d="M1 7.5h4l-2 2.5z" fill="#000"/><rect x="1.500" y="11" width="4.500" height="3.500" fill="#fff" stroke="#000"/><rect x="10" y="11" width="4.500" height="3.500" fill="#fff" stroke="#000"/></svg><svg style="left:1036px;top:522px" width="16" height="16" viewBox="0 0 16 16" ><path d="M3 9c0-7 10-7 10 0" stroke="#000" fill="none" stroke-width="1.3"/><path d="M11 7.5h4l-2 2.5z" fill="#000"/><path d="M1 7.5h4l-2 2.5z" fill="#000"/><rect x="1.500" y="11" width="4.500" height="3.500" fill="#f00" stroke="#000"/><rect x="10" y="11" width="4.500" height="3.500" fill="#f00" stroke="#000"/></svg><div class="sunk" style="left:831px;top:541px;width:229px;height:180px;background:#000"></div><svg style="left:833px;top:543px" width="225" height="176" shape-rendering="crispEdges"><rect width="225" height="176" fill="#000"/><rect x="1" y="1" width="13" height="10" fill="#998F52"/><rect x="15" y="1" width="13" height="10" fill="#7F3F00"/><rect x="29" y="1" width="13" height="10" fill="#FFD5C3"/><rect x="43" y="1" width="13" height="10" fill="#C0C0C0"/><rect x="57" y="1" width="13" height="10" fill="#7D022B"/><rect x="71" y="1" width="13" height="10" fill="#332436"/><rect x="85" y="1" width="13" height="10" fill="#78567F"/><rect x="29" y="12" width="13" height="10" fill="#EEC3A8"/><rect x="43" y="12" width="13" height="10" fill="#C0C0C0"/><path d="M0 0v176M14 0v176M28 0v176M42 0v176M56 0v176M70 0v176M84 0v176M98 0v176M112 0v176M126 0v176M140 0v176M154 0v176M168 0v176M182 0v176M196 0v176M210 0v176M224 0v176M0 0h225M0 11h225M0 22h225M0 33h225M0 44h225M0 55h225M0 66h225M0 77h225M0 88h225M0 99h225M0 110h225M0 121h225M0 132h225M0 143h225M0 154h225M0 165h225M0 176h225" stroke="#E8E8E8" stroke-width="1" transform="translate(.5,.5)"/><rect x="0.5" y="0.5" width="14" height="11" fill="none" stroke="#fff"/><rect x="56.500" y="0.5" width="14" height="11" fill="none" stroke="#fff"/><rect x="55.500" y="-0.5" width="16" height="13" fill="none" stroke="#000"/></svg><div class="sunk1" style="left:831px;top:723px;width:21px;height:17px;"></div><div class="sunk" style="left:854px;top:723px;width:24px;height:17px;background:#fff"><span class="nd" style="left:2px;top:0px">125</span></div><div class="trk" style="left:896px;top:723px;width:93px;height:17px;"></div><div class="btn" style="left:880px;top:723px;width:16px;height:17px;"><svg style="left:0px;top:0px" width="14" height="15" viewBox="0 0 14 15" ><path d="M8.500 3.500v8l-4-4z" fill="#000"/></svg></div><div class="btn" style="left:989px;top:723px;width:16px;height:17px;"><svg style="left:0px;top:0px" width="14" height="15" viewBox="0 0 14 15" ><path d="M5.0 3.500v8l4-4z" fill="#000"/></svg></div><div class="btn" style="left:934px;top:723px;width:16px;height:17px;"></div><div class="sunk1" style="left:831px;top:742px;width:21px;height:17px;"></div><div class="sunk" style="left:854px;top:742px;width:24px;height:17px;background:#fff"><span class="nd" style="left:2px;top:0px">2</span></div><div class="trk" style="left:896px;top:742px;width:93px;height:17px;"></div><div class="btn" style="left:880px;top:742px;width:16px;height:17px;"><svg style="left:0px;top:0px" width="14" height="15" viewBox="0 0 14 15" ><path d="M8.500 3.500v8l-4-4z" fill="#000"/></svg></div><div class="btn" style="left:989px;top:742px;width:16px;height:17px;"><svg style="left:0px;top:0px" width="14" height="15" viewBox="0 0 14 15" ><path d="M5.0 3.500v8l4-4z" fill="#000"/></svg></div><div class="btn" style="left:897px;top:742px;width:16px;height:17px;"></div><div class="sunk1" style="left:831px;top:760px;width:21px;height:17px;"></div><div class="sunk" style="left:854px;top:760px;width:24px;height:17px;background:#fff"><span class="nd" style="left:2px;top:0px">43</span></div><div class="trk" style="left:896px;top:760px;width:93px;height:17px;"></div><div class="btn" style="left:880px;top:760px;width:16px;height:17px;"><svg style="left:0px;top:0px" width="14" height="15" viewBox="0 0 14 15" ><path d="M8.500 3.500v8l-4-4z" fill="#000"/></svg></div><div class="btn" style="left:989px;top:760px;width:16px;height:17px;"><svg style="left:0px;top:0px" width="14" height="15" viewBox="0 0 14 15" ><path d="M5.0 3.500v8l4-4z" fill="#000"/></svg></div><div class="btn" style="left:909px;top:760px;width:16px;height:17px;"></div><div class="a" style="left:1008px;top:724px;width:24px;height:30px;background:#7D022B"></div><div class="a" style="left:1035px;top:724px;width:24px;height:30px;background:#998F52"></div><div class="sunk1" style="left:1007px;top:760px;width:25px;height:15px;"><span class="a" style="left:8px;top:0px;font-size:12px;text-decoration:underline">4</span></div><div class="sunk1" style="left:1034px;top:760px;width:25px;height:15px;"><span class="a" style="left:8px;top:0px;font-size:12px">0</span></div><div class="win" style="left:1068px;top:473px;width:195px;height:305px;"></div><div class="cap capI" style="left:1072px;top:477px;width:187px;height:18px;background:linear-gradient(90deg,#808080,#C0C0C0 71.1%)"></div><svg style="left:1074px;top:478px" width="16" height="16" viewBox="0 0 16 16" ><path d="M6 0h5l5 7-1 3z" fill="#f00"/><path d="M3 0h3l9 10-2 1.5L2.5 2z" fill="#ff0"/><path d="M1 1l1.5-1L13 11.5v2.5l-3-1L.5 3.5z" fill="#0f0"/><path d="M0 3.5h.8L10 13l-1 2-2-1L0 7z" fill="#0ff"/><path d="M0 7l7 7-3 1.2-2.5-1L0 10z" fill="#00f"/><path d="M1.2 6.5l2.8-1.5 2.5.5.5 2-2 1.2-.8 1.8 2-.3.5 2-3.5 1-2-.7z" fill="#fff"/><path d="M2.5 8h1v1h-1zM4.5 6h1v1h-1zM4.5 9h1v1h-1zM6.8 6.5h.9v1.5h-.9zM2 13h2.5v.8H2z" fill="#000"/></svg><div class="btn" style="left:1207px;top:479px;width:16px;height:14px;"><svg style="left:0px;top:0px" width="14" height="12" viewBox="0 0 14 12" ><rect x="3" y="8" width="6" height="2" fill="#000"/></svg></div><div class="btn" style="left:1223px;top:479px;width:16px;height:14px;"><svg style="left:0px;top:0px" width="14" height="12" viewBox="0 0 14 12" ><path d="M2 1h9v9H2zM3 3v6h7V3z" fill="#808080" fill-rule="evenodd"/></svg></div><div class="btn" style="left:1241px;top:479px;width:16px;height:14px;"><svg style="left:0px;top:0px" width="14" height="12" viewBox="0 0 14 12" ><path d="M3 2l6.5 7M9.5 2L3 9" stroke="#000" stroke-width="1.7" fill="none"/></svg></div><div class="hsep" style="left:1072px;top:514px;width:187px;height:2px;"></div><svg style="left:1075px;top:519px" width="16" height="16" viewBox="0 0 16 16" ><path d="M4.5 4.5h7l3 3v8h-10z" fill="#fff" stroke="#000"/><path d="M11.5 4.5v3h3" stroke="#000" fill="none"/><path d="M3 0v6M0 3h6M1 1l4 4M5 1L1 5" stroke="#dd0" stroke-width="1"/></svg><svg style="left:1098px;top:520px" width="16" height="16" viewBox="0 0 16 16" ><path d="M2 2l12 12M14 2L2 14" stroke="#800" stroke-width="2"/></svg><div class="vsep" style="left:1120px;top:519px;width:2px;height:18px;"></div><svg style="left:1127px;top:519px" width="16" height="16" viewBox="0 0 16 16" ><path d="M8 2l5.5 11.5H2.5z" fill="#000"/></svg><svg style="left:1150px;top:519px" width="16" height="16" viewBox="0 0 16 16" ><path d="M8 14.5l5.5-11.500H2.5z" fill="#000"/></svg><svg style="left:1173px;top:520px" width="16" height="16" viewBox="0 0 16 16" ><rect x="0" y="0" width="16" height="7" fill="#f00"/><rect x="0" y="7" width="16" height="8" fill="#00f"/><path d="M6 5h4v4h3l-5 5-5-5h3z" fill="#f00"/></svg><div class="vsep" style="left:1195px;top:519px;width:2px;height:18px;"></div><div class="chk" style="left:1200px;top:516px;width:22px;height:22px;"></div><svg style="left:1204px;top:520px" width="16" height="16" viewBox="0 0 16 16" ><path d="M1.5 1.5h9v12h-9z" fill="#fff" stroke="#000" stroke-width="1.2"/><path d="M12 3v9M9 9l3 4 3-5" stroke="#008" stroke-width="1.5" fill="none"/></svg><svg style="left:1225px;top:519px" width="16" height="16" viewBox="0 0 16 16" ><text x="7" y="15.5" font-family="Liberation Serif" font-weight="bold" font-size="18" text-anchor="middle" fill="#000">P</text></svg><div class="vsep" style="left:1246px;top:519px;width:2px;height:18px;"></div><div class="a" style="left:1254px;top:520px;width:5px;height:15px;background:#fff;border:1px solid #000;border-right:0"></div><div class="sunk" style="left:1072px;top:539px;width:187px;height:234px;background:#fff"></div><div class="a" style="left:1088px;top:541px;width:34px;height:230px;background:#998F52"></div><svg style="left:1088px;top:541px" width="34" height="48" viewBox="0 0 183 258.4"><g transform="translate(0,18)"><use href="#Lshirt"/></g></svg><svg style="left:1144px;top:556px" width="14" height="14"><circle cx="7" cy="7" r="5.6" fill="none" stroke="#000" stroke-width="1.1"/></svg><span class="lt" style="left:1165px;top:557px;color:#000">noname004</span><svg style="left:1088px;top:589px" width="34" height="48" viewBox="0 0 183 258.4"><g transform="translate(0,18)"><use href="#Lskin"/></g></svg><svg style="left:1144px;top:604px" width="14" height="14"><circle cx="7" cy="7" r="5.6" fill="none" stroke="#000" stroke-width="1.1"/></svg><span class="lt" style="left:1165px;top:605px;color:#000">noname002</span><svg style="left:1074px;top:588px" width="167" height="2"><path d="M0 .5h167" stroke="#000" stroke-dasharray="4 3"/></svg><svg style="left:1088px;top:637px" width="34" height="48" viewBox="0 0 183 258.4"><g transform="translate(0,18)"><use href="#Ldress"/></g></svg><svg style="left:1144px;top:652px" width="14" height="14"><circle cx="7" cy="7" r="5.6" fill="none" stroke="#000" stroke-width="1.1"/></svg><span class="lt" style="left:1165px;top:653px;color:#000">noname000</span><svg style="left:1074px;top:636px" width="167" height="2"><path d="M0 .5h167" stroke="#000" stroke-dasharray="4 3"/></svg><div class="a" style="left:1136px;top:685px;width:105px;height:48px;background:#000080"></div><svg style="left:1088px;top:685px" width="34" height="48" viewBox="0 0 183 258.4"><g transform="translate(0,18)"><use href="#LlegB"/><use href="#LlegF"/></g></svg><svg style="left:1144px;top:700px" width="14" height="14"><circle cx="7" cy="7" r="5.6" fill="none" stroke="#fff" stroke-width="1.1"/></svg><span class="lt" style="left:1165px;top:701px;color:#fff">noname003</span><svg style="left:1074px;top:684px" width="167" height="2"><path d="M0 .5h167" stroke="#000" stroke-dasharray="4 3"/></svg><svg style="left:1088px;top:733px" width="34" height="38" viewBox="0 0 183 204.5"><g transform="translate(0,18)"><use href="#Lhair"/></g></svg><svg style="left:1144px;top:748px" width="14" height="14"><circle cx="7" cy="7" r="5.6" fill="none" stroke="#000" stroke-width="1.1"/></svg><span class="lt" style="left:1165px;top:749px;color:#000">noname001</span><svg style="left:1074px;top:732px" width="167" height="2"><path d="M0 .5h167" stroke="#000" stroke-dasharray="4 3"/></svg><div class="trk" style="left:1241px;top:541px;width:16px;height:230px;"></div><div class="btn" style="left:1241px;top:541px;width:16px;height:16px;"><svg style="left:0px;top:0px" width="14" height="14" viewBox="0 0 14 14" ><path d="M3.0 8.500h8l-4-4z" fill="#000"/></svg></div><div class="btn" style="left:1241px;top:755px;width:16px;height:16px;"><svg style="left:0px;top:0px" width="14" height="14" viewBox="0 0 14 14" ><path d="M3.0 5.0h8l-4 4z" fill="#000"/></svg></div><div class="btn" style="left:1241px;top:557px;width:16px;height:157px;"></div><svg style="left:0;top:0" width="1280" height="800"><path d="M691 148L485 177M493 167L485 177L504.5 185" stroke="#FF7F3F" stroke-width="1.5" fill="none"/><path d="M34.5 759.5H445M229.5 734.5H353M270 739.6H422.4" stroke="#00FF80" stroke-width="3" fill="none"/><path d="M422 739.5L459 600.6M446.4 610.5L459 600.6L466.4 617.5" stroke="#00FF80" stroke-width="1.7" fill="none"/><path d="M958 426L999 511" stroke="#FF0000" stroke-width="2"/><rect x="981.5" y="511.5" width="33" height="33" fill="none" stroke="#FF0000" stroke-width="2.4"/><circle cx="883.5" cy="546.8" r="3.6" fill="#FF0000"/><path d="M883.5 547V563.5M877 556.5L883.5 563.5L890 556.5" stroke="#FF0000" stroke-width="2" fill="none"/><g font-family="&quot;Liberation Sans&quot;, &quot;Noto Sans CJK JP&quot;, sans-serif"><text x="7.29" y="32.9" font-size="11.6" fill="#000" textLength="43.97" lengthAdjust="spacingAndGlyphs">ファイル(F)</text><rect x="42.9" y="33.8" width="5.4" height="1" fill="#000"/><text x="63.98" y="32.9" font-size="11.6" fill="#000" textLength="39.45" lengthAdjust="spacingAndGlyphs">編集(E)</text><rect x="92.9" y="33.8" width="6.6" height="1" fill="#000"/><text x="117.59" y="32.9" font-size="11.6" fill="#000" textLength="39.32" lengthAdjust="spacingAndGlyphs">表示(V)</text><rect x="144.9" y="33.8" width="8.6" height="1" fill="#000"/><text x="171.57" y="32.9" font-size="11.6" fill="#000" textLength="41.67" lengthAdjust="spacingAndGlyphs">イメージ(I)</text><rect x="207.7" y="33.8" width="1.9" height="1" fill="#000"/><text x="227.39" y="32.9" font-size="11.6" fill="#000" textLength="63.55" lengthAdjust="spacingAndGlyphs">選択範囲(S)</text><rect x="279.9" y="33.8" width="6.9" height="1" fill="#000"/><text x="303.06" y="32.9" font-size="11.6" fill="#000" textLength="37.74" lengthAdjust="spacingAndGlyphs">レイヤ(L)</text><rect x="332.4" y="33.8" width="5.4" height="1" fill="#000"/><text x="353.5" y="32.9" font-size="11.6" fill="#000" textLength="32.81" lengthAdjust="spacingAndGlyphs">ペン(P)</text><rect x="376.7" y="33.8" width="6.1" height="1" fill="#000"/><text x="399.85" y="32.9" font-size="11.6" fill="#000" textLength="42.65" lengthAdjust="spacingAndGlyphs">ズーム(Z)</text><rect x="432.2" y="33.8" width="7.0" height="1" fill="#000"/><text x="455.82" y="32.9" font-size="11.6" fill="#000" textLength="54.96" lengthAdjust="spacingAndGlyphs">ウィンドウ(W)</text><rect x="497.7" y="33.8" width="10.1" height="1" fill="#000"/><text x="524.35" y="32.9" font-size="11.6" fill="#000" textLength="39.07" lengthAdjust="spacingAndGlyphs">設定(T)</text><rect x="551.7" y="33.8" width="8.3" height="1" fill="#000"/><text x="577.05" y="32.9" font-size="11.6" fill="#000" textLength="41.2" lengthAdjust="spacingAndGlyphs">ヘルプ(H)</text><rect x="608.2" y="33.8" width="6.4" height="1" fill="#000"/><text x="944.79" y="55.2" font-size="12.5" fill="#000" textLength="49.1" lengthAdjust="spacingAndGlyphs">不透明度</text><text x="1066.45" y="55.2" font-size="12.5" fill="#000" textLength="26.2" lengthAdjust="spacingAndGlyphs">効果</text><text x="1101.23" y="55.5" font-size="12.5" fill="#000" textLength="27" lengthAdjust="spacingAndGlyphs">通常</text><text x="1206.45" y="55.2" font-size="12.5" fill="#000" textLength="31" lengthAdjust="spacingAndGlyphs">スタイル</text><text x="1244.23" y="55.5" font-size="12.5" fill="#000" textLength="27" lengthAdjust="spacingAndGlyphs">通常</text><text x="669.28" y="494.2" font-size="12.5" font-weight="bold" fill="#D6D3CE" textLength="56.5" lengthAdjust="spacingAndGlyphs">ポジション</text><text x="655.68" y="511.8" font-size="12" fill="#7c7c7c" textLength="44.5" lengthAdjust="spacingAndGlyphs">ファイル(F)</text><rect x="691.7" y="512.7" width="5.4" height="1" fill="#7c7c7c"/><text x="714.05" y="511.8" font-size="12" fill="#7c7c7c" textLength="39.07" lengthAdjust="spacingAndGlyphs">設定(T)</text><rect x="741.4" y="512.7" width="8.3" height="1" fill="#7c7c7c"/><text x="765.94" y="511.8" font-size="12" fill="#7c7c7c" textLength="43.27" lengthAdjust="spacingAndGlyphs">ズーム(Z)</text><rect x="798.7" y="512.7" width="7.1" height="1" fill="#7c7c7c"/><text x="852.07" y="494.2" font-size="12.5" font-weight="bold" fill="#D6D3CE" textLength="77.9" lengthAdjust="spacingAndGlyphs">カラーパレット</text><text x="837.78" y="510.8" font-size="12" fill="#7c7c7c" textLength="44.5" lengthAdjust="spacingAndGlyphs">ファイル(F)</text><rect x="873.8" y="511.7" width="5.4" height="1" fill="#7c7c7c"/><text x="895.28" y="510.8" font-size="12" fill="#7c7c7c" textLength="39.66" lengthAdjust="spacingAndGlyphs">編集(E)</text><rect x="924.3" y="511.7" width="6.6" height="1" fill="#7c7c7c"/><text x="948.48" y="510.8" font-size="12" fill="#7c7c7c" textLength="46.1" lengthAdjust="spacingAndGlyphs">パレット(C)</text><rect x="984.0" y="511.7" width="7.2" height="1" fill="#7c7c7c"/><text x="833.93" y="736.6" font-size="13.5" fill="#000" textLength="15.2" lengthAdjust="spacingAndGlyphs">赤</text><text x="834.36" y="755.6" font-size="13.5" fill="#000" textLength="14.2" lengthAdjust="spacingAndGlyphs">緑</text><text x="834.21" y="773.6" font-size="13.5" fill="#000" textLength="14.6" lengthAdjust="spacingAndGlyphs">青</text><text x="1091.07" y="491.2" font-size="12.5" font-weight="bold" fill="#D6D3CE" textLength="61.6" lengthAdjust="spacingAndGlyphs">レイヤ管理</text><text x="1078.27" y="508.8" font-size="12" fill="#7c7c7c" textLength="44.9" lengthAdjust="spacingAndGlyphs">ファイル(F)</text><rect x="1114.6" y="509.7" width="5.4" height="1" fill="#7c7c7c"/><text x="1134.94" y="508.8" font-size="12" fill="#7c7c7c" textLength="38.27" lengthAdjust="spacingAndGlyphs">レイヤ(L)</text><rect x="1164.7" y="509.7" width="5.5" height="1" fill="#7c7c7c"/><text x="1186.75" y="508.8" font-size="12" fill="#7c7c7c" textLength="39.17" lengthAdjust="spacingAndGlyphs">設定(T)</text><rect x="1214.2" y="509.7" width="8.3" height="1" fill="#7c7c7c"/><text x="698.14" y="144.53" font-size="17.5" fill="#FFFF00" textLength="242.8" lengthAdjust="spacingAndGlyphs">視認の容易な背景色に変更。</text><text x="697.54" y="163.75" font-size="17.1" fill="#FFFF00" textLength="336.9" lengthAdjust="spacingAndGlyphs">ある程度トーンの低い色の方が目に優しい</text><text x="402.02" y="566.7" font-size="18.2" fill="#00FF80" textLength="145" lengthAdjust="spacingAndGlyphs">格ゲー準拠なので</text><text x="401.88" y="585.64" font-size="18.1" fill="#00FF80" textLength="144" lengthAdjust="spacingAndGlyphs">接地感を持たせる</text><text x="794.61" y="402.04" font-size="17.5" fill="#FFFF80" textLength="187" lengthAdjust="spacingAndGlyphs">パレット上書きツール。</text><text x="793.08" y="420.47" font-size="17.9" fill="#FFFF80" textLength="60.3" lengthAdjust="spacingAndGlyphs">ドラッグ</text><text x="856.47" y="420.69" font-size="17.7" fill="#FFFF80" textLength="289.5" lengthAdjust="spacingAndGlyphs">＆ドロップでドラッグ元からコピーする</text></g></svg></body></html>
